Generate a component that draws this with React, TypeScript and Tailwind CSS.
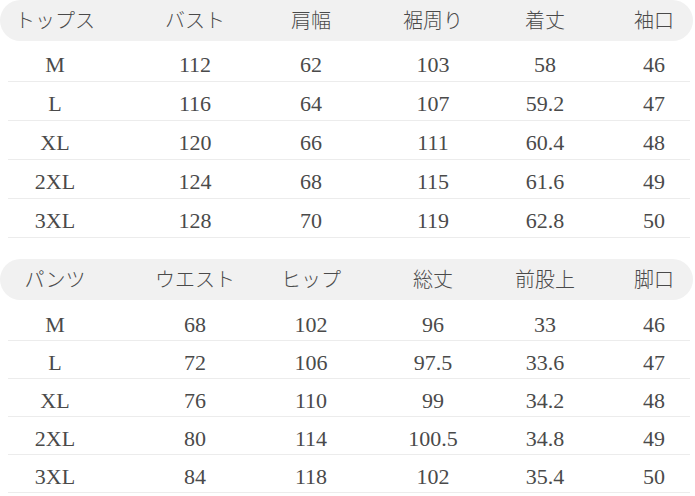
const FONT = { fontFamily: '"Liberation Serif", "Noto Sans CJK JP", serif' };

// each column is a fixed 100px cell, offset so its centre lands where the chart has it
const COL = ['ml-[5px]', 'ml-[40px]', 'ml-[16px]', 'ml-[22px]', 'ml-[12px]', 'ml-[9px]'];

const tops = {
  head: ['トップス', 'バスト', '肩幅', '裾周り', '着丈', '袖口'],
  rows: [
    ['M', '112', '62', '103', '58', '46'],
    ['L', '116', '64', '107', '59.2', '47'],
    ['XL', '120', '66', '111', '60.4', '48'],
    ['2XL', '124', '68', '115', '61.6', '49'],
    ['3XL', '128', '70', '119', '62.8', '50'],
  ],
};

const pants = {
  head: ['パンツ', 'ウエスト', 'ヒップ', '総丈', '前股上', '脚口'],
  rows: [
    ['M', '68', '102', '96', '33', '46'],
    ['L', '72', '106', '97.5', '33.6', '47'],
    ['XL', '76', '110', '99', '34.2', '48'],
    ['2XL', '80', '114', '100.5', '34.8', '49'],
    ['3XL', '84', '118', '102', '35.4', '50'],
  ],
};

function SizeTable({ data, rowClass }: { data: { head: string[]; rows: string[][] }; rowClass: string }) {
  return (
    <div>
      <div className="flex h-[41px] w-[693px] items-center rounded-full bg-[#f1f1f1] text-[20px] font-light text-[#4a4a4a]">
        {data.head.map((h, i) => (
          <div key={h} className={`w-[100px] shrink-0 text-center ${COL[i]}`}>
            {h}
          </div>
        ))}
      </div>
      <div className={rowClass}>
        {data.rows.map((r) => (
          <div key={r[0]} className="ml-[8px] flex h-[39px] w-[682px] items-center border-b border-[#ececec] pt-[6px] text-[22px] text-[#4a4a4a]">
            {r.map((v, i) => (
              <div key={i} className={`-ml-[8px] w-[100px] shrink-0 text-center first:ml-[-3px] ${COL[i]}`}>
                {v}
              </div>
            ))}
          </div>
        ))}
      </div>
    </div>
  );
}

export default function App() {
  return (
    <div className="h-[496px] w-[695px] overflow-hidden bg-white leading-none" style={FONT}>
      <SizeTable data={tops} rowClass="mt-[2px]" />
      <div className="mt-[21px]">
        <SizeTable data={pants} rowClass="mt-[3px] [&>div]:h-[38px]" />
      </div>
    </div>
  );
}
